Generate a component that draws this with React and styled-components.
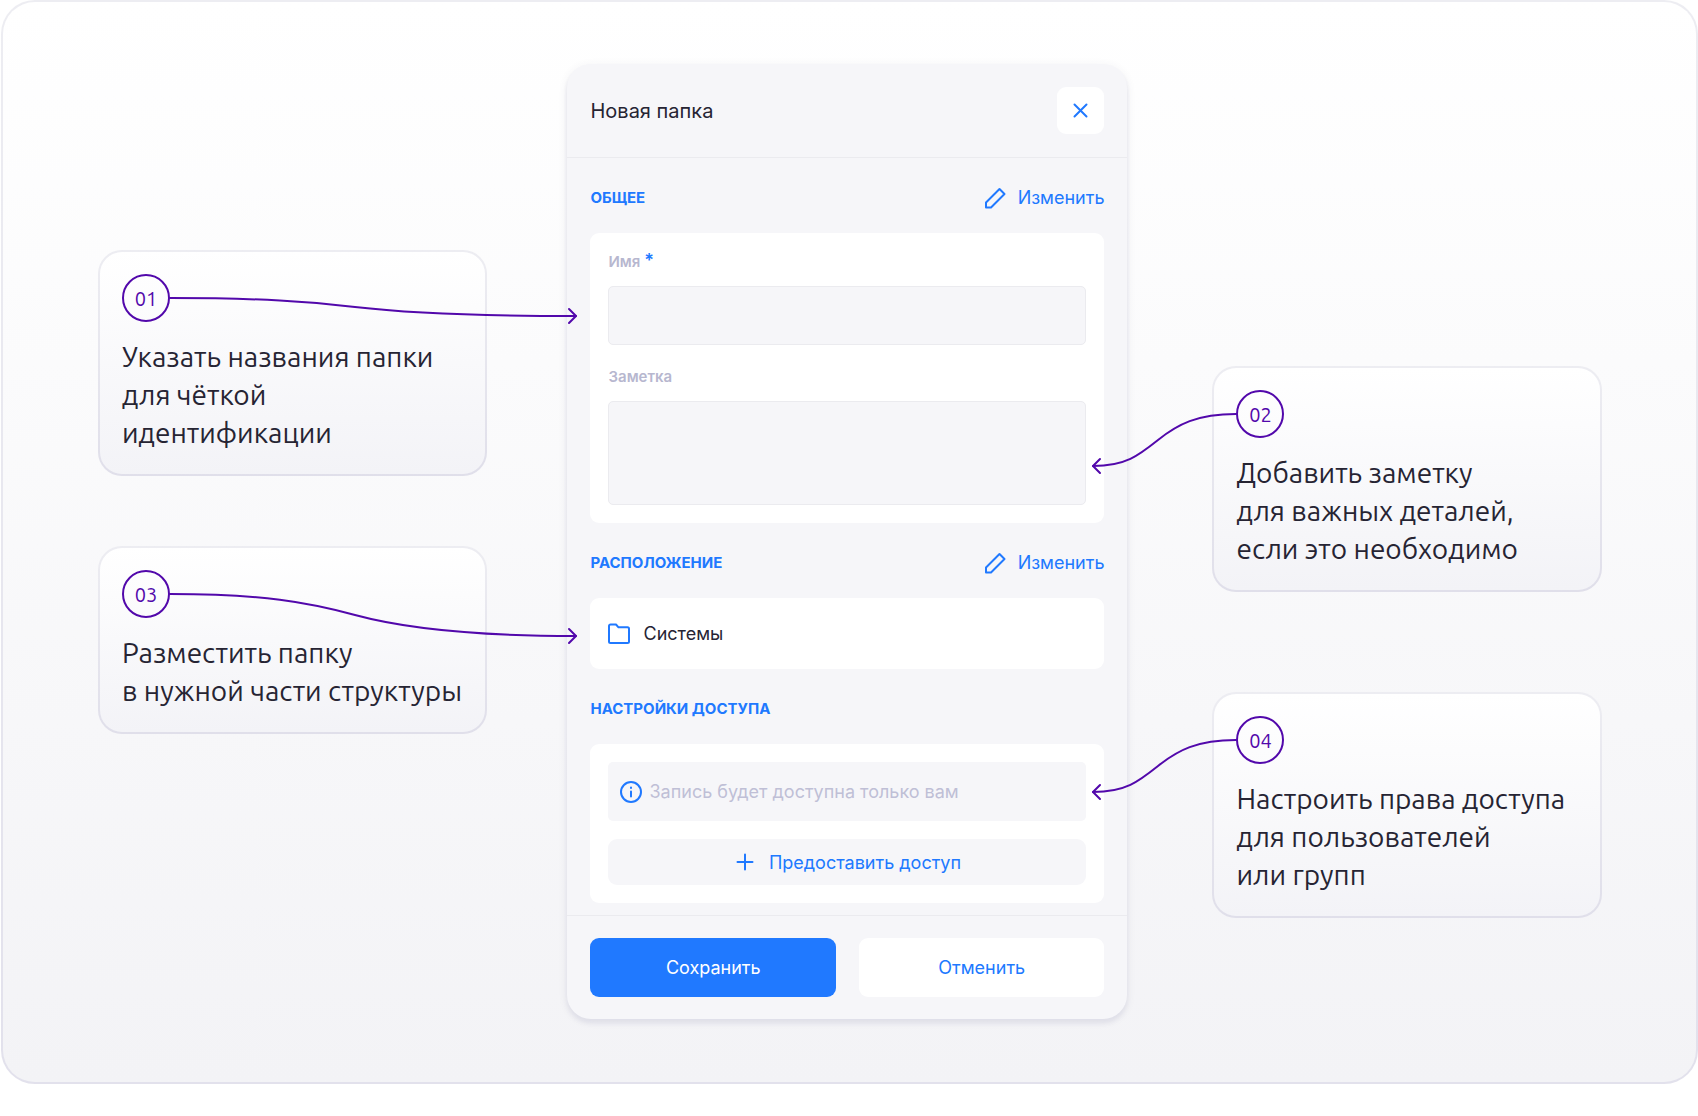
import React, { useState } from "react";
import styled, { createGlobalStyle } from "styled-components";

const GlobalStyle = createGlobalStyle`
  * {
    box-sizing: border-box;
  }

  body {
    margin: 0;
    background: #fff;
    color: #262433;
    font-family: Inter, "Noto Sans", sans-serif;
  }

  button, input, textarea {
    font-family: inherit;
  }
`;

const Stage = styled.main`
  display: grid;
  grid-template-columns: 469fr 560px 474fr;
  align-items: start;
  margin-left: 1px;
  padding: 62px 94px 63px 95px;
  border: 2px solid transparent;
  border-radius: 34px;
  background:
    linear-gradient(#ffffff, #f3f3f6) padding-box,
    linear-gradient(#ededf2, #e2e1ec) border-box;
`;

const Column = styled.div`
  position: relative;
  z-index: 1;
  display: flex;
  flex-direction: column;
`;

const LeftColumn = styled(Column)`
  gap: 70px;
  padding: 186px 80px 0 0;
`;

const RightColumn = styled(Column)`
  gap: 100px;
  padding: 302px 0 0 85px;
`;

const Card = styled.article`
  display: flex;
  flex-direction: column;
  align-items: flex-start;
  gap: 16px;
  padding: 22px;
  border: 2px solid transparent;
  border-radius: 24px;
  background:
    linear-gradient(#ffffff, #f3f3f7) padding-box,
    linear-gradient(#ededf2, #e0dfea) border-box;
`;

const Badge = styled.div`
  position: relative;
  display: flex;
  align-items: center;
  justify-content: center;
  width: 48px;
  height: 48px;
  border: 2px solid #5208ab;
  border-radius: 50%;
  color: #5208ab;
  font-family: Ubuntu, "Noto Sans", sans-serif;
  font-size: 20px;
`;

const Arrow = styled.svg`
  position: absolute;
  top: 12px;
  ${({ $side }) => ($side === "left" ? "right: 46px;" : "left: 46px;")}
  overflow: visible;
  fill: none;
  stroke: #5208ab;
  stroke-width: 2;
  stroke-linecap: round;
  stroke-linejoin: round;
  pointer-events: none;
`;

const CardText = styled.p`
  margin: 0;
  font-family: Ubuntu, "Noto Sans", sans-serif;
  font-size: 28px;
  line-height: 38px;
  white-space: pre-line;
`;

const Panel = styled.form`
  border-radius: 24px;
  background: #f6f6f9;
  box-shadow: 0 4px 4px #e0e0e9, 0 2px 10px rgba(60, 60, 90, 0.08);
`;

const PanelHeader = styled.header`
  display: flex;
  align-items: center;
  justify-content: space-between;
  padding: 23px;
  border-bottom: 1px solid #ebebef;
`;

const PanelTitle = styled.h1`
  margin: 0;
  font-size: 20px;
  font-weight: 400;
`;

const CloseButton = styled.button`
  display: flex;
  align-items: center;
  justify-content: center;
  width: 47px;
  height: 47px;
  padding: 0;
  border: 0;
  border-radius: 9px;
  background: #fff;
  color: #2079ff;
  cursor: pointer;
`;

const PanelBody = styled.div`
  padding: 0 23px 12px;
`;

const SectionHead = styled.div`
  display: flex;
  align-items: center;
  justify-content: space-between;
  height: 75px;
  padding-top: 4px;
`;

const SectionTitle = styled.h2`
  margin: 0;
  color: #2079ff;
  font-size: 15px;
  font-weight: 700;
  text-transform: uppercase;
`;

const EditButton = styled.button`
  display: flex;
  align-items: center;
  gap: 12px;
  padding: 0;
  border: 0;
  background: none;
  color: #2079ff;
  font-size: 18px;
  cursor: pointer;
`;

const Box = styled.div`
  display: flex;
  flex-direction: column;
  padding: 18px;
  border-radius: 9px;
  background: #fff;
`;

const Label = styled.label`
  height: 21px;
  margin-bottom: 14px;
  color: #b7b7cf;
  font-size: 15px;
  font-weight: 600;
  line-height: 21px;
`;

const Required = styled.span`
  color: #2079ff;
  font-size: 18px;
  line-height: 1;
`;

const Input = styled.input`
  height: 59px;
  margin-bottom: 21px;
  padding: 0 16px;
  border: 1px solid #ebebef;
  border-radius: 5px;
  background: #f6f6f9;
  font-size: 18px;
`;

const TextArea = styled.textarea`
  height: 104px;
  padding: 16px;
  border: 1px solid #ebebef;
  border-radius: 5px;
  background: #f6f6f9;
  font-size: 18px;
  resize: none;
`;

const Location = styled.div`
  display: flex;
  align-items: center;
  gap: 13px;
  height: 35px;
  font-size: 18px;

  svg {
    color: #2079ff;
  }
`;

const Notice = styled.p`
  display: flex;
  align-items: center;
  gap: 7px;
  height: 59px;
  margin: 0 0 18px;
  padding: 0 12px;
  border-radius: 5px;
  background: #f6f6f9;
  color: #bfbfd6;
  font-size: 18px;

  svg {
    color: #2079ff;
  }
`;

const GrantButton = styled.button`
  display: flex;
  align-items: center;
  justify-content: center;
  gap: 13px;
  height: 46px;
  border: 0;
  border-radius: 9px;
  background: #f6f6f9;
  color: #2079ff;
  font-size: 18px;
  cursor: pointer;
`;

const PanelFooter = styled.footer`
  display: flex;
  gap: 23px;
  padding: 22px 23px;
  border-top: 1px solid #ebebef;
`;

const ActionButton = styled.button`
  flex: 1;
  height: 59px;
  border: 0;
  border-radius: 9px;
  background: ${({ $primary }) => ($primary ? "#2079ff" : "#fff")};
  color: ${({ $primary }) => ($primary ? "#fff" : "#2079ff")};
  font-size: 18px;
  cursor: pointer;
`;

const Icon = ({ children }) => (
  <svg
    width="22"
    height="22"
    viewBox="0 0 22 22"
    fill="none"
    stroke="currentColor"
    strokeWidth="2"
    strokeLinecap="round"
    strokeLinejoin="round"
    aria-hidden="true"
  >
    {children}
  </svg>
);

const PencilIcon = () => (
  <Icon>
    <path d="M2 20.5v-5L15.500 2l5 5L7 20.500z" />
  </Icon>
);

const FolderIcon = () => (
  <Icon>
    <path d="M1 3a1.5 1.5 0 0 1 1.5-1.5H8l2.500 2.800h9A1.500 1.500 0 0 1 21 5.800v12.700a1.500 1.500 0 0 1-1.500 1.500h-17A1.500 1.500 0 0 1 1 18.500z" />
  </Icon>
);

const InfoIcon = () => (
  <Icon>
    <circle cx="11" cy="11" r="10" />
    <path d="M11 10.500v5M11 6.600v.4" />
  </Icon>
);

// Curve from the badge to the field it describes
const Connector = ({ width, drop, side }) => {
  const from = side === "left" ? width : 0;
  const to = side === "left" ? 0 : width;
  const back = side === "left" ? 7 : -7;
  const end = 10 + drop;
  const mid = Math.round(width * 0.455);

  return (
    <Arrow $side={side} width={width} height={drop + 20} aria-hidden="true">
      <path
        d={`M${from} 10C${(from + mid) / 2} 10 ${(from + mid * 3) / 4} ${10 + drop * 0.2} ${mid} ${10 + drop / 2}S${(to + mid) / 2} ${end} ${to} ${end}`}
      />
      <path d={`M${to + back} ${end - 7}L${to} ${end}L${to + back} ${end + 7}`} />
    </Arrow>
  );
};

const Step = ({ number, text, ...arrow }) => (
  <Card>
    <Badge>
      {number}
      <Connector {...arrow} />
    </Badge>
    <CardText>{text}</CardText>
  </Card>
);

const App = () => {
  const [name, setName] = useState("");
  const [note, setNote] = useState("");

  return (
    <>
      <GlobalStyle />
      <Stage>
        <LeftColumn>
          <Step
            number="01"
            text={"Указать названия папки\nдля чёткой\nидентификации"}
            side="right"
            width={406}
            drop={18}
          />
          <Step
            number="03"
            text={"Разместить папку\nв нужной части структуры"}
            side="right"
            width={406}
            drop={42}
          />
        </LeftColumn>

        <Panel onSubmit={(e) => e.preventDefault()}>
          <PanelHeader>
            <PanelTitle>Новая папка</PanelTitle>
            <CloseButton type="button" aria-label="Закрыть">
              <Icon>
                <path d="M4.500 4.500l12 12M16.500 4.500l-12 12" />
              </Icon>
            </CloseButton>
          </PanelHeader>

          <PanelBody>
            <SectionHead>
              <SectionTitle>Общее</SectionTitle>
              <EditButton type="button">
                <PencilIcon />
                Изменить
              </EditButton>
            </SectionHead>
            <Box>
              <Label htmlFor="name">
                Имя <Required>*</Required>
              </Label>
              <Input id="name" value={name} onChange={(e) => setName(e.target.value)} />
              <Label htmlFor="note">Заметка</Label>
              <TextArea id="note" value={note} onChange={(e) => setNote(e.target.value)} />
            </Box>

            <SectionHead>
              <SectionTitle>Расположение</SectionTitle>
              <EditButton type="button">
                <PencilIcon />
                Изменить
              </EditButton>
            </SectionHead>
            <Box>
              <Location>
                <FolderIcon />
                Системы
              </Location>
            </Box>

            <SectionHead>
              <SectionTitle>Настройки доступа</SectionTitle>
            </SectionHead>
            <Box>
              <Notice>
                <InfoIcon />
                Запись будет доступна только вам
              </Notice>
              <GrantButton type="button">
                <Icon>
                  <path d="M11 3.500v15M3.500 11h15" />
                </Icon>
                Предоставить доступ
              </GrantButton>
            </Box>
          </PanelBody>

          <PanelFooter>
            <ActionButton type="submit" $primary>Сохранить</ActionButton>
            <ActionButton type="button">Отменить</ActionButton>
          </PanelFooter>
        </Panel>

        <RightColumn>
          <Step
            number="02"
            text={"Добавить заметку\nдля важных деталей,\nесли это необходимо"}
            side="left"
            width={143}
            drop={52}
          />
          <Step
            number="04"
            text={"Настроить права доступа\nдля пользователей\nили групп"}
            side="left"
            width={143}
            drop={52}
          />
        </RightColumn>
      </Stage>
    </>
  );
};

export default App;
